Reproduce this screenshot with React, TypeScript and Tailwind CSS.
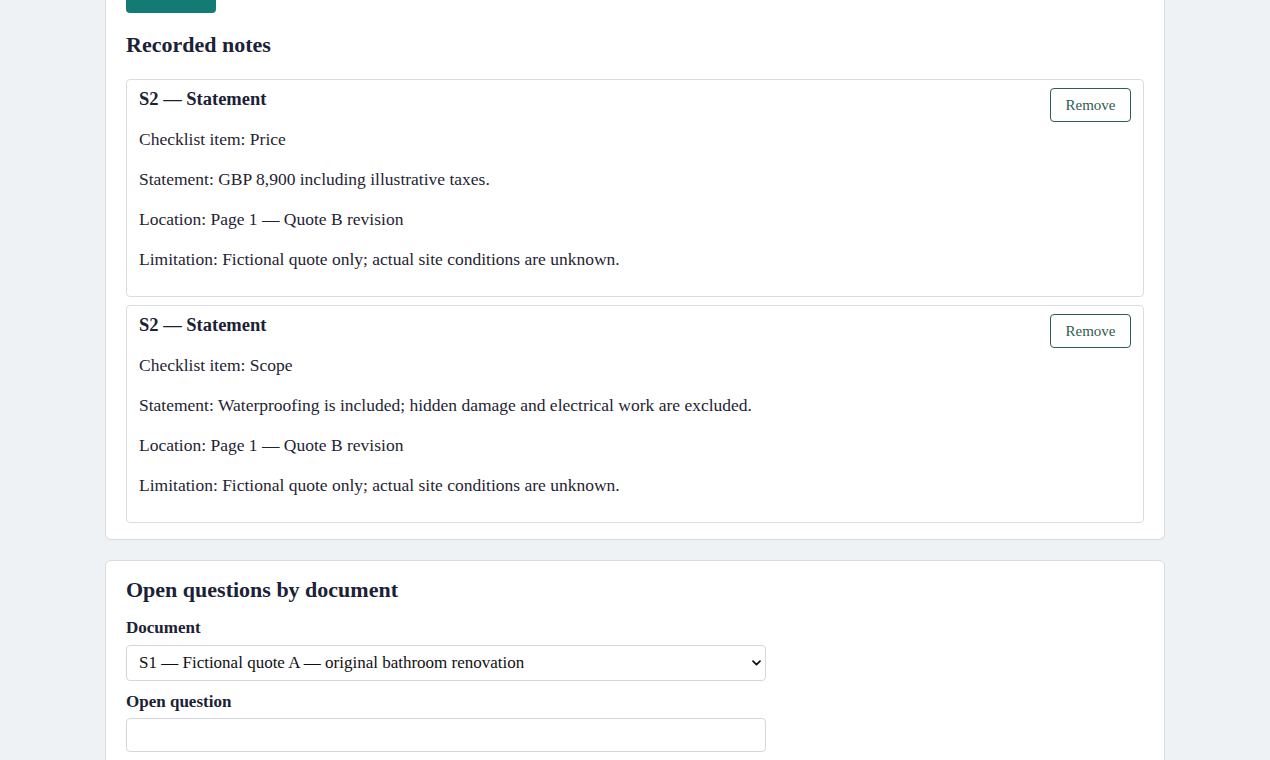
const serif = "font-['Liberation_Serif',Georgia,serif]";

type Note = {
  id: string;
  title: string;
  item: string;
  statement: string;
  location: string;
  limitation: string;
};

const notes: Note[] = [
  {
    id: "n1",
    title: "S2 — Statement",
    item: "Price",
    statement: "GBP 8,900 including illustrative taxes.",
    location: "Page 1 — Quote B revision",
    limitation: "Fictional quote only; actual site conditions are unknown.",
  },
  {
    id: "n2",
    title: "S2 — Statement",
    item: "Scope",
    statement:
      "Waterproofing is included; hidden damage and electrical work are excluded.",
    location: "Page 1 — Quote B revision",
    limitation: "Fictional quote only; actual site conditions are unknown.",
  },
];

function NoteCard({ note }: { note: Note }) {
  return (
    <article className="relative rounded-[4px] border border-[#d9dde2] bg-white px-3 pt-2 pb-[9px]">
      <h3 className="text-[18.5px] leading-[22px] font-bold text-[#1b2236]">
        {note.title}
      </h3>
      <button
        type="button"
        className="absolute top-2 right-3 h-[34px] w-[81px] rounded-[4px] border border-[#2f5b55] bg-white text-[15px] text-[#2f5b55]"
      >
        Remove
      </button>
      <p className="mt-[17px] text-[17.5px] leading-6 text-[#1f2433]">
        Checklist item: {note.item}
      </p>
      <p className="mt-4 text-[17.5px] leading-6 text-[#1f2433]">
        Statement: {note.statement}
      </p>
      <p className="mt-4 text-[17.5px] leading-6 text-[#1f2433]">
        Location: {note.location}
      </p>
      <p className="my-4 text-[17.5px] leading-6 text-[#1f2433]">
        Limitation: {note.limitation}
      </p>
    </article>
  );
}

export default function App() {
  return (
    <div className={`h-[760px] overflow-hidden bg-[#eef2f5] ${serif}`}>
      <div className="mx-auto flex w-[1060px] flex-col gap-5">
        <section className="-mt-[42px] rounded-b-[6px] border border-t-0 border-[#d9dde2] bg-white px-5 pt-5 pb-4">
          <button
            type="button"
            className="h-[35px] w-[90px] rounded-[4px] bg-[#147a74] text-[15px] font-bold text-white"
          >
            Save note
          </button>
          <h2 className="mt-5 text-[22px] leading-6 font-bold text-[#1b2236]">
            Recorded notes
          </h2>
          <div className="mt-[22px] flex flex-col gap-2">
            {notes.map((note) => (
              <NoteCard key={note.id} note={note} />
            ))}
          </div>
        </section>

        <section className="rounded-[6px] border border-[#d9dde2] bg-white px-5 pt-[17px] pb-5">
          <h2 className="text-[22px] leading-6 font-bold text-[#1b2236]">
            Open questions by document
          </h2>
          <label className="mt-4 block text-[17px] leading-5 font-bold text-[#1b2236]">
            Document
          </label>
          <div className="relative mt-[7px] w-[640px]">
            <select className="h-[36px] w-full appearance-none rounded-[4px] border border-[#d3d7dc] bg-white px-3 text-[17px] text-[#111]">
              <option>S1 — Fictional quote A — original bathroom renovation</option>
              <option>S2 — Fictional quote B — revised bathroom renovation</option>
            </select>
            <svg
              className="pointer-events-none absolute top-[15px] right-[5px]"
              width="9"
              height="6"
              viewBox="0 0 9 6"
              fill="none"
            >
              <path
                d="M1 1.2l3.5 3.5 3.5-3.5"
                stroke="#111"
                strokeWidth="1.7"
                strokeLinecap="round"
                strokeLinejoin="round"
              />
            </svg>
          </div>
          <label className="mt-[11px] block text-[17px] leading-5 font-bold text-[#1b2236]">
            Open question
          </label>
          <input
            type="text"
            className="mt-[6px] h-[34px] w-[640px] rounded-[4px] border border-[#d3d7dc] bg-white px-3 text-[15px]"
          />
        </section>
      </div>
    </div>
  );
}
